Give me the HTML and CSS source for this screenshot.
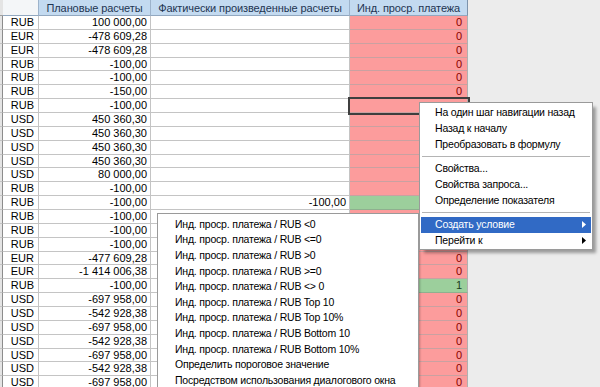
FILE: index.html
```html
<!DOCTYPE html>
<html lang="ru">
<head>
<meta charset="utf-8">
<title>Отчет</title>
<link rel="stylesheet" href="styles.css">
</head>
<body>
<div class="sheet">
  <div class="row head">
    <div class="c edge"></div>
    <div class="c cur"></div>
    <div class="c plan">Плановые расчеты</div>
    <div class="c fact">Фактически произведенные расчеты</div>
    <div class="c ind">Инд. проср. платежа</div>
    <div class="c rest"></div>
  </div>
  <div class="row"><div class="c edge"></div><div class="c cur">RUB</div><div class="c plan">100 000,00</div><div class="c fact"></div><div class="c ind">0</div><div class="c rest"></div></div>
  <div class="row"><div class="c edge"></div><div class="c cur">EUR</div><div class="c plan">-478 609,28</div><div class="c fact"></div><div class="c ind">0</div><div class="c rest"></div></div>
  <div class="row"><div class="c edge"></div><div class="c cur">EUR</div><div class="c plan">-478 609,28</div><div class="c fact"></div><div class="c ind">0</div><div class="c rest"></div></div>
  <div class="row"><div class="c edge"></div><div class="c cur">RUB</div><div class="c plan">-100,00</div><div class="c fact"></div><div class="c ind">0</div><div class="c rest"></div></div>
  <div class="row"><div class="c edge"></div><div class="c cur">RUB</div><div class="c plan">-100,00</div><div class="c fact"></div><div class="c ind">0</div><div class="c rest"></div></div>
  <div class="row"><div class="c edge"></div><div class="c cur">RUB</div><div class="c plan">-150,00</div><div class="c fact"></div><div class="c ind">0</div><div class="c rest"></div></div>
  <div class="row"><div class="c edge"></div><div class="c cur">RUB</div><div class="c plan">-100,00</div><div class="c fact"></div><div class="c ind sel"></div><div class="c rest"></div></div>
  <div class="row"><div class="c edge"></div><div class="c cur">USD</div><div class="c plan">450 360,30</div><div class="c fact"></div><div class="c ind"></div><div class="c rest"></div></div>
  <div class="row"><div class="c edge"></div><div class="c cur">USD</div><div class="c plan">450 360,30</div><div class="c fact"></div><div class="c ind"></div><div class="c rest"></div></div>
  <div class="row"><div class="c edge"></div><div class="c cur">USD</div><div class="c plan">450 360,30</div><div class="c fact"></div><div class="c ind"></div><div class="c rest"></div></div>
  <div class="row"><div class="c edge"></div><div class="c cur">USD</div><div class="c plan">450 360,30</div><div class="c fact"></div><div class="c ind"></div><div class="c rest"></div></div>
  <div class="row"><div class="c edge"></div><div class="c cur">USD</div><div class="c plan">80 000,00</div><div class="c fact"></div><div class="c ind"></div><div class="c rest"></div></div>
  <div class="row"><div class="c edge"></div><div class="c cur">RUB</div><div class="c plan">-100,00</div><div class="c fact"></div><div class="c ind"></div><div class="c rest"></div></div>
  <div class="row"><div class="c edge"></div><div class="c cur">RUB</div><div class="c plan">-100,00</div><div class="c fact">-100,00</div><div class="c ind green"></div><div class="c rest"></div></div>
  <div class="row"><div class="c edge"></div><div class="c cur">RUB</div><div class="c plan">-100,00</div><div class="c fact"></div><div class="c ind"></div><div class="c rest"></div></div>
  <div class="row"><div class="c edge"></div><div class="c cur">RUB</div><div class="c plan">-100,00</div><div class="c fact"></div><div class="c ind"></div><div class="c rest"></div></div>
  <div class="row"><div class="c edge"></div><div class="c cur">RUB</div><div class="c plan">-100,00</div><div class="c fact"></div><div class="c ind"></div><div class="c rest"></div></div>
  <div class="row"><div class="c edge"></div><div class="c cur">EUR</div><div class="c plan">-477 609,28</div><div class="c fact"></div><div class="c ind">0</div><div class="c rest"></div></div>
  <div class="row"><div class="c edge"></div><div class="c cur">EUR</div><div class="c plan">-1 414 006,38</div><div class="c fact"></div><div class="c ind">0</div><div class="c rest"></div></div>
  <div class="row"><div class="c edge"></div><div class="c cur">RUB</div><div class="c plan">-100,00</div><div class="c fact"></div><div class="c ind green">1</div><div class="c rest"></div></div>
  <div class="row"><div class="c edge"></div><div class="c cur">USD</div><div class="c plan">-697 958,00</div><div class="c fact"></div><div class="c ind">0</div><div class="c rest"></div></div>
  <div class="row"><div class="c edge"></div><div class="c cur">USD</div><div class="c plan">-542 928,38</div><div class="c fact"></div><div class="c ind">0</div><div class="c rest"></div></div>
  <div class="row"><div class="c edge"></div><div class="c cur">USD</div><div class="c plan">-697 958,00</div><div class="c fact"></div><div class="c ind">0</div><div class="c rest"></div></div>
  <div class="row"><div class="c edge"></div><div class="c cur">USD</div><div class="c plan">-542 928,38</div><div class="c fact"></div><div class="c ind">0</div><div class="c rest"></div></div>
  <div class="row"><div class="c edge"></div><div class="c cur">USD</div><div class="c plan">-697 958,00</div><div class="c fact"></div><div class="c ind">0</div><div class="c rest"></div></div>
  <div class="row"><div class="c edge"></div><div class="c cur">USD</div><div class="c plan">-542 928,38</div><div class="c fact"></div><div class="c ind">0</div><div class="c rest"></div></div>
  <div class="row"><div class="c edge"></div><div class="c cur">USD</div><div class="c plan">-697 958,00</div><div class="c fact"></div><div class="c ind">0</div><div class="c rest"></div></div>
</div>

<div class="menu main-menu">
  <div class="item">На один шаг навигации назад</div>
  <div class="item">Назад к началу</div>
  <div class="item">Преобразовать в формулу</div>
  <div class="sep"></div>
  <div class="item">Свойства...</div>
  <div class="item">Свойства запроса...</div>
  <div class="item">Определение показателя</div>
  <div class="sep"></div>
  <div class="item active">Создать условие<svg class="arrow" width="4" height="7" viewBox="0 0 4 7"><path d="M0 0 L4 3.5 L0 7 Z"/></svg></div>
  <div class="item">Перейти к<svg class="arrow" width="4" height="7" viewBox="0 0 4 7"><path d="M0 0 L4 3.5 L0 7 Z"/></svg></div>
</div>

<div class="menu sub-menu">
  <div class="item">Инд. проср. платежа / RUB &lt;0</div>
  <div class="item">Инд. проср. платежа / RUB &lt;=0</div>
  <div class="item">Инд. проср. платежа / RUB &gt;0</div>
  <div class="item">Инд. проср. платежа / RUB &gt;=0</div>
  <div class="item">Инд. проср. платежа / RUB &lt;&gt; 0</div>
  <div class="item">Инд. проср. платежа / RUB Top 10</div>
  <div class="item">Инд. проср. платежа / RUB Top 10%</div>
  <div class="item">Инд. проср. платежа / RUB Bottom 10</div>
  <div class="item">Инд. проср. платежа / RUB Bottom 10%</div>
  <div class="item">Определить пороговое значение</div>
  <div class="item">Посредством использования диалогового окна</div>
</div>
</body>
</html>
```

FILE: styles.css
```css
html, body {
  margin: 0;
  padding: 0;
  background: #ececec;
  overflow: hidden;
}
body {
  width: 600px;
  height: 387px;
  position: relative;
  font-family: Tahoma, "Liberation Sans", "DejaVu Sans", sans-serif;
  font-size: 11px;
  color: #000;
}
.sheet {
  display: flex;
  flex-direction: column;
}
.row {
  display: grid;
  grid-template-columns: 3px 36px 112px 199px 118px 1fr;
  height: 13.86px;
  line-height: 13px;
}
.c {
  box-sizing: border-box;
  border-right: 1px solid #c4c4c4;
  border-bottom: 1px solid #c4c4c4;
  background: #fff;
  text-align: right;
  padding-right: 3px;
  white-space: nowrap;
  overflow: hidden;
}
.c.edge {
  background: #e4e4e4;
  border-right: 1px solid #8c8c8c;
  padding: 0;
}
.c.cur {
  padding-right: 4px;
}
.c.ind {
  background: #fc9c9c;
  color: #8a0000;
  border-right: 1px solid #b0b0b0;
  border-bottom: 1px solid #c9a1a1;
  padding-right: 5px;
}
.c.ind.green {
  background: #9ccf9c;
  color: #1c3b1c;
  border-bottom-color: #8fb08f;
}
.c.ind.sel {
  position: relative;
  outline: 2px solid #3f3f3f;
  outline-offset: 0;
  z-index: 1;
}
.c.rest {
  background: #ececec;
  border: none;
}
.head {
  height: 16px;
  line-height: 16px;
}
.head .c {
  background: #c3daf0;
  color: #1e3552;
  text-align: center;
  padding: 0 2px;
  border-right: 1px solid #9db3cb;
  border-bottom: 1px solid #92a8c0;
  letter-spacing: -0.1px;
}
.head .c.edge {
  background: #e4e4e4;
  border-right: 1px solid #8c8c8c;
  border-bottom: 1px solid #a0a0a0;
}
.head .c.cur {
  background: #f4f6f8;
  border-right: 1px solid #9db3cb;
}
.head .c.ind {
  border-right: 1px solid #7d93ab;
}
.head .c.rest {
  background: #ececec;
  border: none;
}

.menu {
  position: absolute;
  box-sizing: border-box;
  background: #fff;
  border: 1px solid #9a9a9a;
  padding: 2px 1px;
  z-index: 5;
  font-size: 10.5px;
  letter-spacing: -0.2px;
}
.main-menu {
  left: 419px;
  top: 102px;
  width: 174px;
  height: 148px;
  box-shadow: 4px 4px 3px -1px rgba(0, 0, 0, 0.35);
}
.sub-menu {
  left: 157px;
  top: 213px;
  width: 262px;
  height: 190px;
  padding: 3px 1px;
  box-shadow: 2px 2px 2px -1px rgba(0, 0, 0, 0.25);
  z-index: 4;
}
.item {
  display: flex;
  align-items: center;
  justify-content: space-between;
  height: 16px;
  line-height: 15px;
  padding: 0 4px 1px 14px;
  box-sizing: border-box;
  white-space: nowrap;
  color: #000;
}
.sub-menu .item {
  height: 15.6px;
  padding-left: 16px;
}
.item.active {
  background: #316ac5;
  color: #fff;
}
.arrow {
  fill: #000;
  margin-right: 1px;
}
.item.active .arrow {
  fill: #fff;
}
.sep {
  height: 1px;
  background: #b4b4b4;
  margin: 3px 1px 4px;
}
```
